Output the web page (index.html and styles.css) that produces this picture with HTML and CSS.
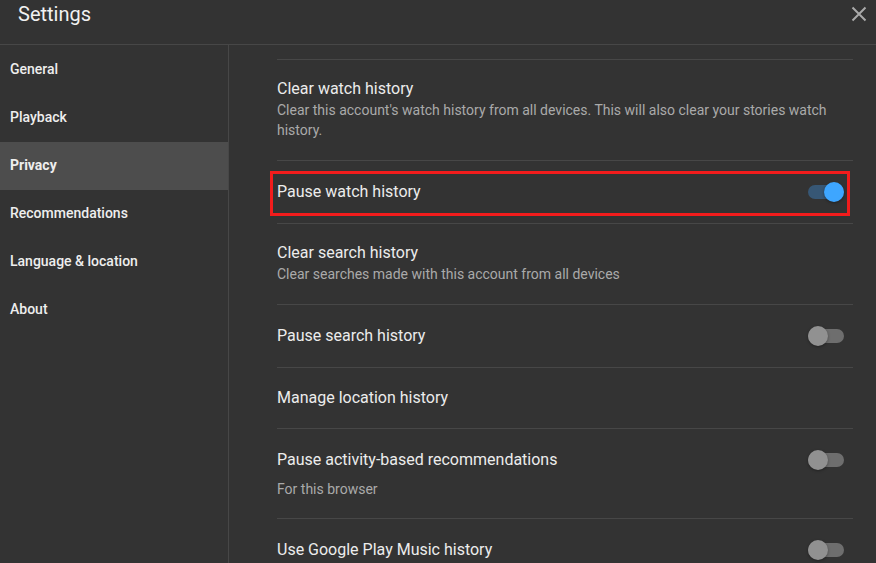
FILE: index.html
```html
<!doctype html>
<html lang="en-US">
  <head>
    <title>Settings</title>
    <meta charset="UTF-8">
    <meta name="viewport" content="width=device-width, initial-scale=1">
    <link rel="stylesheet" href="styles.css">
  </head>
  <body>
<header class="topbar">
  <h1>Settings</h1>
  <button class="close" aria-label="Close">
    <svg width="16" height="16" viewBox="0 0 16 16"><path d="M1.5 1.5l13 13M14.5 1.5l-13 13"/></svg>
  </button>
</header>
<div class="layout">
  <nav class="sidebar">
    <a class="nav-item">General</a>
    <a class="nav-item">Playback</a>
    <a class="nav-item active">Privacy</a>
    <a class="nav-item">Recommendations</a>
    <a class="nav-item">Language &amp; location</a>
    <a class="nav-item">About</a>
  </nav>
  <main class="content">
    <section class="item described">
      <div class="head"><span class="title">Clear watch history</span></div>
      <p class="desc">Clear this account's watch history from all devices. This will also clear your stories watch history.</p>
    </section>
    <section class="item marked">
      <div class="head with-toggle">
        <span class="title">Pause watch history</span>
        <span class="toggle on"><i></i></span>
      </div>
    </section>
    <section class="item described">
      <div class="head"><span class="title">Clear search history</span></div>
      <p class="desc">Clear searches made with this account from all devices</p>
    </section>
    <section class="item">
      <div class="head with-toggle">
        <span class="title">Pause search history</span>
        <span class="toggle"><i></i></span>
      </div>
    </section>
    <section class="item">
      <div class="head"><span class="title">Manage location history</span></div>
    </section>
    <section class="item">
      <div class="head with-toggle">
        <span class="title">Pause activity-based recommendations</span>
        <span class="toggle"><i></i></span>
      </div>
      <p class="desc below-toggle">For this browser</p>
    </section>
    <section class="item">
      <div class="head with-toggle">
        <span class="title">Use Google Play Music history</span>
        <span class="toggle"><i></i></span>
      </div>
    </section>
  </main>
</div>
  </body>
</html>
```

FILE: styles.css
```css
html, body {
  margin: 0;
  height: 100%;
  overflow: hidden;
  font-family: Roboto, "Liberation Sans", sans-serif;
  background: #333;
  color: #eee;
}
.topbar {
  box-sizing: border-box;
  height: 45px;
  display: flex;
  justify-content: space-between;
  align-items: flex-start;
  padding: 0 9px 0 18px;
  border-bottom: 1px solid #474747;
}
.topbar h1 {
  margin: 0;
  font-size: 20px;
  font-weight: 400;
  line-height: 28px;
  color: #f1f1f1;
}
.close {
  margin-top: 6px;
  padding: 0;
  border: 0;
  background: none;
  width: 16px;
  height: 16px;
}
.close svg {
  display: block;
  stroke: #aaa;
  stroke-width: 2;
}
.layout {
  display: flex;
  height: calc(100% - 45px);
}
.sidebar {
  width: 228px;
  flex: none;
  padding-top: 1px;
  border-right: 1px solid #474747;
}
.nav-item {
  display: block;
  height: 48px;
  line-height: 47px;
  padding-left: 10px;
  font-size: 14px;
  font-weight: 500;
  color: #eee;
}
.nav-item.active {
  background: #4d4d4d;
  font-weight: 700;
}
.content {
  flex: 1;
  padding: 14px 23px 0 48px;
}
.item {
  position: relative;
  border-top: 1px solid #474747;
  padding: 19px 0;
}
.item.described {
  padding: 18px 0 20px;
}
.head {
  display: flex;
  align-items: center;
  justify-content: space-between;
  min-height: 22px;
}
.head.with-toggle {
  height: 24px;
}
.title {
  font-size: 16px;
  line-height: 22px;
  color: #ececec;
}
.desc {
  margin: 0;
  font-size: 14px;
  line-height: 20px;
  color: #aaa;
}
.desc.below-toggle {
  margin-top: 7px;
}
/* red outline drawn over the highlighted row */
.marked::after {
  content: '';
  position: absolute;
  top: 10px;
  bottom: 7px;
  left: -7px;
  right: 3px;
  border: 3px solid #f21c1c;
}
.toggle {
  position: relative;
  width: 36px;
  height: 14px;
  margin-right: 9px;
  border-radius: 7px;
  background: #6e6e6e;
}
.toggle i {
  position: absolute;
  top: -3px;
  left: 0;
  width: 20px;
  height: 20px;
  border-radius: 50%;
  background: #919191;
  box-shadow: 0 1px 3px rgba(0, 0, 0, 0.35);
}
.toggle.on {
  background: #375775;
}
.toggle.on i {
  left: 16px;
  background: #3ea6ff;
}
```
